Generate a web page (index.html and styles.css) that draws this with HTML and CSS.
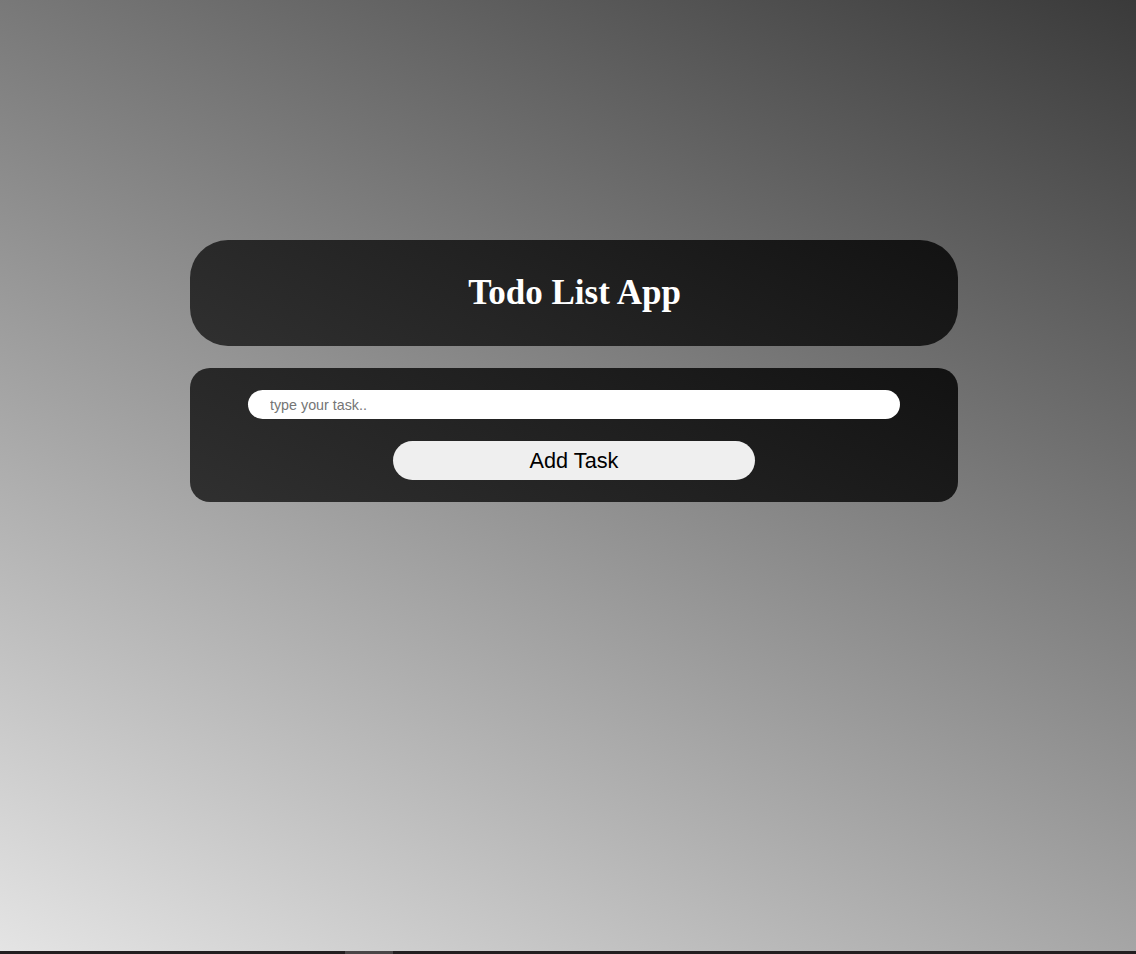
FILE: index.html
```html
<!DOCTYPE html>
<html>
<head>
<meta charset="utf-8">
<title>Todo List App</title>
<link rel="stylesheet" href="styles.css">
</head>
<body>
<main class="page">
  <div class="app">
    <header class="card header-card">
      <h1 class="title">Todo List App</h1>
    </header>
    <section class="card form-card">
      <input class="task-input" type="text" placeholder="type your task..">
      <button class="add-btn" type="button">Add Task</button>
    </section>
  </div>
</main>
<div class="bottom-bar"><div class="bottom-thumb"></div></div>
</body>
</html>
```
FILE: styles.css
```css
html, body {
  margin: 0;
  padding: 0;
  height: 954px;
  overflow: hidden;
}
.page {
  height: 951px;
  background: linear-gradient(26deg, #e4e4e4, #3a3a3a);
  display: flex;
  flex-direction: column;
}
.app {
  width: 768px;
  margin-left: 190px;
  padding-top: 240px;
  display: flex;
  flex-direction: column;
  gap: 22px;
}
.card {
  background: linear-gradient(26deg, #303030, #121212);
}
.header-card {
  height: 106px;
  border-radius: 38px;
  display: flex;
  align-items: center;
  justify-content: center;
}
.title {
  margin: 0;
  color: #ffffff;
  font-family: "Liberation Serif", "Times New Roman", serif;
  font-weight: bold;
  font-size: 35px;
  line-height: 1;
  padding-bottom: 2px;
  padding-left: 1px;
}
.form-card {
  border-radius: 20px;
  padding: 22px 0;
  display: flex;
  flex-direction: column;
  align-items: center;
  gap: 22px;
}
.task-input {
  box-sizing: border-box;
  width: 652px;
  height: 29px;
  border: none;
  outline: none;
  border-radius: 15px;
  background: #ffffff;
  padding: 0 22px;
  font-family: "Liberation Sans", Arial, sans-serif;
  font-size: 14.3px;
  color: #222;
}
.task-input::placeholder {
  color: #757575;
}
.add-btn {
  box-sizing: border-box;
  width: 362px;
  height: 39px;
  border: none;
  border-radius: 20px;
  background: #efefef;
  color: #000;
  font-family: "Liberation Sans", Arial, sans-serif;
  font-size: 21.7px;
  padding: 0;
}
.bottom-bar {
  height: 3px;
  background: #231f20;
  display: flex;
}
.bottom-thumb {
  margin-left: 345px;
  width: 48px;
  background: #4a4647;
}
```
